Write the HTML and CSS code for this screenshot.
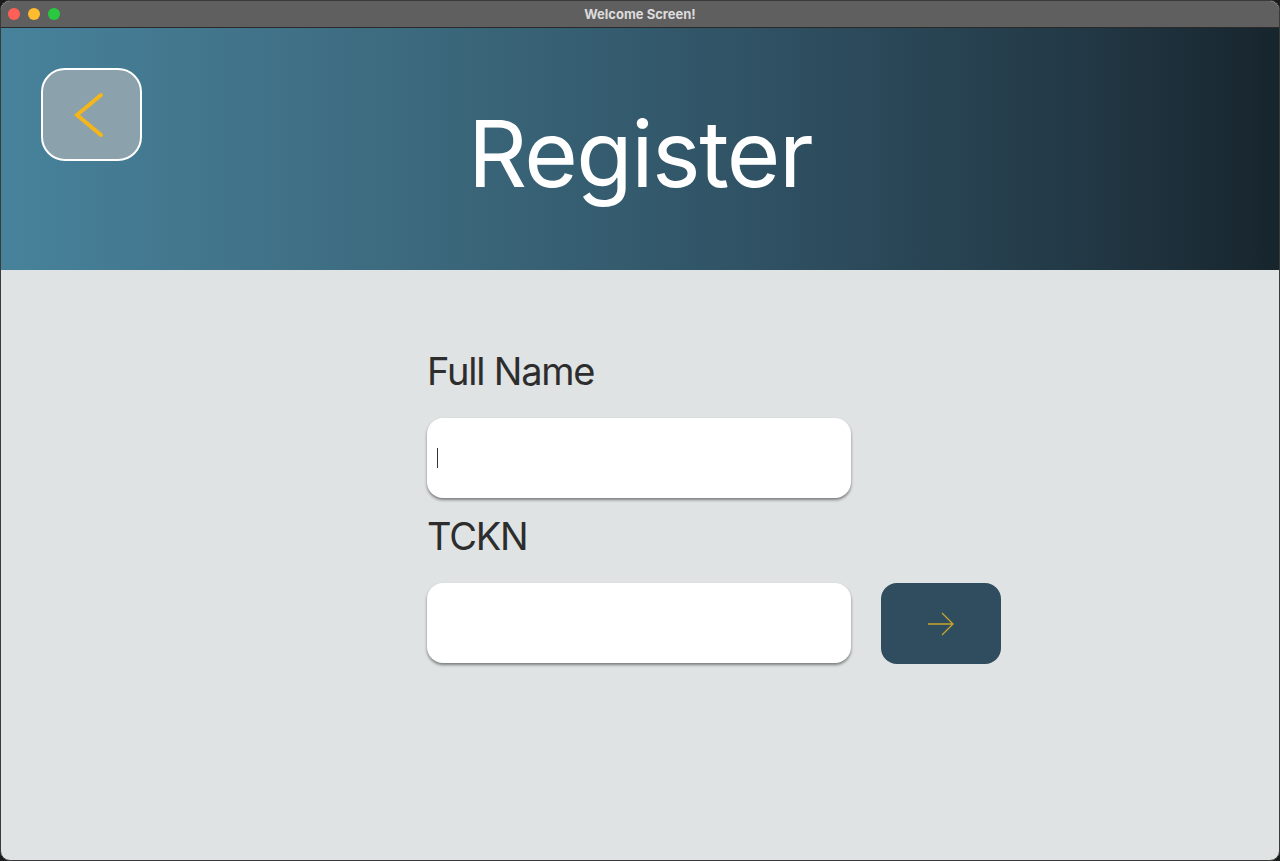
FILE: index.html
```html
<!DOCTYPE html>
<html>
<head>
<meta charset="utf-8">
<link rel="stylesheet" href="styles.css">
</head>
<body>
<div class="window">
  <div class="titlebar">
    <div class="lights">
      <span class="light red"></span>
      <span class="light yellow"></span>
      <span class="light green"></span>
    </div>
    <div class="title">Welcome Screen!</div>
  </div>
  <header class="header">
    <button class="back" aria-label="Back">
      <svg width="36" height="46" viewBox="0 0 36 46"><polyline points="30,3 6,23 30,43" fill="none" stroke="#f4b619" stroke-width="4" stroke-linecap="round" stroke-linejoin="miter"/></svg>
    </button>
    <h1 class="heading">Register</h1>
  </header>
  <main class="content">
    <div class="form">
      <label class="label">Full Name</label>
      <div class="field"><span class="caret"></span></div>
      <label class="label second">TCKN</label>
      <div class="row">
        <div class="field"></div>
        <button class="next" aria-label="Next">
          <svg width="30" height="26" viewBox="0 0 30 26"><path d="M2 13 H27 M16 2 L27 13 L16 24" fill="none" stroke="#c9a52a" stroke-width="1.3"/></svg>
        </button>
      </div>
    </div>
  </main>
</div>
</body>
</html>
```

FILE: styles.css
```css
* { box-sizing: border-box; }
html, body { margin: 0; padding: 0; width: 1280px; height: 861px; overflow: hidden; background: #1b1b1b; }
body { font-family: Inter, "Noto Sans", sans-serif; }
.window {
  width: 1280px; height: 861px;
  display: flex; flex-direction: column;
  background: #dfe3e4;
  border: 1px solid #3a3a3a;
  border-radius: 10px;
  overflow: hidden;
}
.titlebar {
  height: 27px;
  background: #605f5f;
  position: relative;
  display: flex; align-items: center; justify-content: center;
  border-bottom: 1px solid #2b2b2b;
  flex: none;
}
.lights { position: absolute; left: 7px; top: 7px; display: flex; gap: 8px; }
.light { width: 12px; height: 12px; border-radius: 50%; display: block; }
.red { background: #fe5f57; }
.yellow { background: #febc2e; }
.green { background: #28c840; }
.title { color: #dcdcdc; font-weight: 700; font-size: 13px; font-family: Inter, "Noto Sans", sans-serif; }
.header {
  height: 242px; flex: none;
  background: linear-gradient(90deg, #47829b 0%, #3d6b80 30%, #2f5163 60%, #223845 85%, #17252d 100%);
  position: relative;
  display: flex; justify-content: center;
}
.back {
  position: absolute; left: 40px; top: 40px;
  width: 101px; height: 93px;
  border: 2px solid #ffffff; border-radius: 24px;
  background: #8ba1ab;
  display: flex; align-items: center; justify-content: center;
  padding: 0 6px 0 0; cursor: pointer;
}
.heading {
  margin: 0; padding-top: 80px;
  color: #ffffff; font-weight: 400; font-size: 92px; line-height: 1;
  letter-spacing: -1.5px;
}
.content { flex: 1; display: flex; justify-content: center; }
.form { width: 574px; padding-top: 78px; margin-left: 148px; display: flex; flex-direction: column; }
.label { font-size: 38px; color: #2d2d2d; letter-spacing: -1.2px; line-height: 46px; height: 46px; }
.label:first-child { margin-bottom: 24px; }
.label.second { margin-top: 15px; margin-bottom: 24px; }
.field {
  width: 424px; height: 80px; background: #ffffff; border-radius: 16px;
  box-shadow: 0 2px 3px rgba(0,0,0,0.45);
  display: flex; align-items: center; padding-left: 10px;
}
.caret { width: 1px; height: 20px; background: #333; display: block; }
.row { display: flex; gap: 30px; align-items: flex-start; }
.next {
  width: 120px; height: 81px; background: #2f4d5e; border: none; border-radius: 16px;
  display: flex; align-items: center; justify-content: center; cursor: pointer; padding: 0;
}
```
